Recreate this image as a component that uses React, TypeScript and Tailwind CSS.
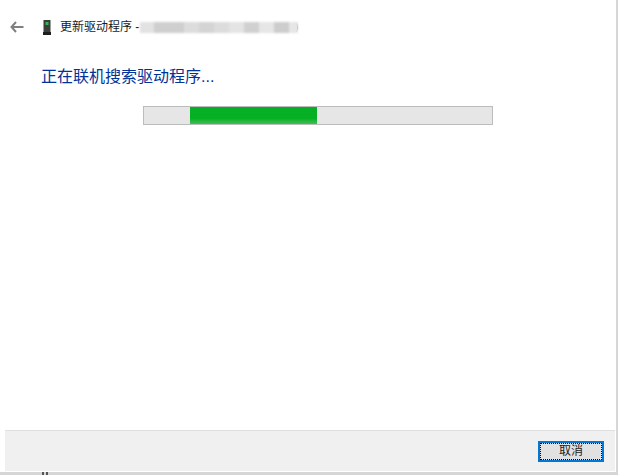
const BLUR = ["#e2e2e2", "#cfcfcf", "#dcdcdc", "#d4d4d4", "#dcdcdc", "#e4e4e4", "#d0d0d0", "#e6e6e6", "#cdcdcd", "#e6e6e6"];
const BLUR_W = ["w-[14px]", "w-[30px]", "w-[15px]", "w-[15px]", "w-[15px]", "w-[15px]", "w-[15px]", "w-[15px]", "w-[15px]", "w-[9px]"];

function DeviceIcon() {
  return (
    <svg width="8" height="15" viewBox="0 0 8 15" className="shrink-0">
      <rect x="0.5" y="0" width="7" height="12" fill="#3a3f3c" />
      <rect x="0" y="12" width="8" height="3" fill="#1d1f1e" />
      <rect x="2.5" y="2" width="3" height="3" fill="#35b45a" />
    </svg>
  );
}

function BackArrow() {
  return (
    <svg width="14" height="12" viewBox="0 0 14 12" className="shrink-0">
      <path d="M6 1 L1.5 6 L6 11 M2 6 H13.5" fill="none" stroke="#7f7f7f" strokeWidth="2" />
    </svg>
  );
}

export default function App() {
  return (
    <div className="relative w-[620px] h-[475px] bg-white overflow-hidden font-['Liberation_Sans','Noto_Sans_CJK_SC',sans-serif]">
      <div className="w-[618px] h-[475px] border-r-2 border-b-[3px] border-[#d6d6d6] flex flex-col">
        <div className="flex items-center h-[16px] mt-[19px] pl-[10px]">
          <BackArrow />
          <div className="w-[19px]" />
          <DeviceIcon />
          <span className="ml-[9px] text-[12px] leading-[16px] text-[#1a1a1a]">更新驱动程序 -</span>
          <div className="ml-[1px] flex h-[11px] blur-[1px]">
            {BLUR.map((c, i) => (
              <div key={i} className={BLUR_W[i]} style={{ backgroundColor: c }} />
            ))}
          </div>
          <span className="-ml-[3px] text-[9px] leading-[16px] text-[#555555]">)</span>
        </div>

        <h1 className="mt-[31px] ml-[41px] text-[16px] leading-[22px] font-normal text-[#003399]">
          正在联机搜索驱动程序...
        </h1>

        <div className="mt-[18px] ml-[143px] w-[350px] h-[19px] bg-[#e6e6e6] border border-[#bcbcbc] pl-[46px]">
          <div className="w-[127px] h-full bg-gradient-to-b from-[#06b025] from-70% to-[#3cc055]" />
        </div>

        <div className="flex-1" />

        <div className="ml-[5px] mr-[1px] h-[41px] mb-[1px] bg-[#f0f0f0] border-t border-[#dfdfdf] flex items-center justify-end pr-[11px]">
          <button className="w-[66px] h-[21px] bg-[#e1e1e1] border-2 border-[#0078d7] outline-1 outline-dotted -outline-offset-3 outline-black text-[12px] leading-none text-[#1a1a1a]">
            取消
          </button>
        </div>
      </div>
      {/* 下端の切れ端 */}
      <div className="absolute left-[42px] bottom-0 w-[2px] h-[3px] bg-[#555555]" />
      <div className="absolute left-[46px] bottom-0 w-[2px] h-[3px] bg-[#555555]" />
    </div>
  );
}
